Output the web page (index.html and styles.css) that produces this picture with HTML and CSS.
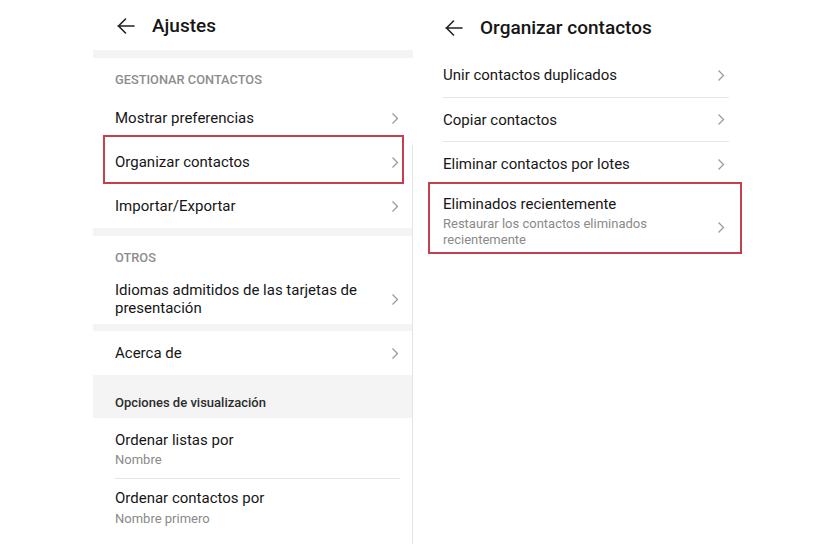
FILE: index.html
```html
<!DOCTYPE html>
<html lang="es">
<head>
<meta charset="utf-8">
<title>Ajustes</title>
<link rel="stylesheet" href="styles.css">
</head>
<body>
<div class="page">
  <section class="panel left">
    <header class="head">
      <svg class="back" width="18" height="16" viewBox="0 0 18 16"><path d="M1 8H17M8.5 1L1.5 8L8.5 15" fill="none" stroke="#222" stroke-width="1.6" stroke-linecap="round" stroke-linejoin="round"/></svg>
      <h1 class="title">Ajustes</h1>
    </header>
    <div class="band"></div>
    <div class="label">GESTIONAR CONTACTOS</div>
    <div class="row"><span class="txt">Mostrar preferencias</span><svg class="chev" width="8" height="13" viewBox="0 0 8 13"><path d="M1.5 1.5L6.5 6.5L1.5 11.5" fill="none" stroke="#9b9b9b" stroke-width="1.3"/></svg></div>
    <div class="row hl"><span class="txt">Organizar contactos</span><svg class="chev" width="8" height="13" viewBox="0 0 8 13"><path d="M1.5 1.5L6.5 6.5L1.5 11.5" fill="none" stroke="#9b9b9b" stroke-width="1.3"/></svg></div>
    <div class="row"><span class="txt">Importar/Exportar</span><svg class="chev" width="8" height="13" viewBox="0 0 8 13"><path d="M1.5 1.5L6.5 6.5L1.5 11.5" fill="none" stroke="#9b9b9b" stroke-width="1.3"/></svg></div>
    <div class="band"></div>
    <div class="label">OTROS</div>
    <div class="row tall"><span class="txt">Idiomas admitidos de las tarjetas de presentación</span><svg class="chev" width="8" height="13" viewBox="0 0 8 13"><path d="M1.5 1.5L6.5 6.5L1.5 11.5" fill="none" stroke="#9b9b9b" stroke-width="1.3"/></svg></div>
    <div class="band thin"></div>
    <div class="row"><span class="txt">Acerca de</span><svg class="chev" width="8" height="13" viewBox="0 0 8 13"><path d="M1.5 1.5L6.5 6.5L1.5 11.5" fill="none" stroke="#9b9b9b" stroke-width="1.3"/></svg></div>
    <div class="group">Opciones de visualización</div>
    <div class="item divided"><div class="txt">Ordenar listas por</div><div class="sub">Nombre</div></div>
    <div class="item"><div class="txt">Ordenar contactos por</div><div class="sub">Nombre primero</div></div>
  </section>
  <section class="panel right">
    <header class="head rhead">
      <svg class="back" width="18" height="16" viewBox="0 0 18 16"><path d="M1 8H17M8.5 1L1.5 8L8.5 15" fill="none" stroke="#222" stroke-width="1.6" stroke-linecap="round" stroke-linejoin="round"/></svg>
      <h1 class="title">Organizar contactos</h1>
    </header>
    <div class="list">
      <div class="rrow line"><span class="txt">Unir contactos duplicados</span><svg class="chev" width="8" height="13" viewBox="0 0 8 13"><path d="M1.5 1.5L6.5 6.5L1.5 11.5" fill="none" stroke="#9b9b9b" stroke-width="1.3"/></svg></div>
      <div class="rrow line short"><span class="txt">Copiar contactos</span><svg class="chev" width="8" height="13" viewBox="0 0 8 13"><path d="M1.5 1.5L6.5 6.5L1.5 11.5" fill="none" stroke="#9b9b9b" stroke-width="1.3"/></svg></div>
      <div class="rrow"><span class="txt">Eliminar contactos por lotes</span><svg class="chev" width="8" height="13" viewBox="0 0 8 13"><path d="M1.5 1.5L6.5 6.5L1.5 11.5" fill="none" stroke="#9b9b9b" stroke-width="1.3"/></svg></div>
      <div class="rrow big hl2">
        <div class="stack"><div class="txt">Eliminados recientemente</div><div class="sub2">Restaurar los contactos eliminados recientemente</div></div>
        <svg class="chev" width="8" height="13" viewBox="0 0 8 13"><path d="M1.5 1.5L6.5 6.5L1.5 11.5" fill="none" stroke="#9b9b9b" stroke-width="1.3"/></svg>
      </div>
    </div>
  </section>
</div>
</body>
</html>
```

FILE: styles.css
```css
* { box-sizing: border-box; }
html, body { margin: 0; padding: 0; background: #fff; }
body {
  font-family: Roboto, "Noto Sans", "Liberation Sans", sans-serif;
  color: #161616;
  width: 838px;
  height: 544px;
  overflow: hidden;
}
.page {
  display: flex;
  padding-left: 93px;
  height: 544px;
}
.panel { position: relative; }
.left { width: 320px; }
.left::after {
  content: "";
  position: absolute;
  right: 0;
  top: 145px;
  bottom: 0;
  width: 1px;
  background: #e3e3e3;
}
.right { width: 330px; }

.head {
  height: 50px;
  display: flex;
  align-items: center;
  padding-left: 24px;
  padding-top: 2px;
  gap: 17px;
}
.back { flex: none; }
.title {
  margin: 0;
  font-size: 19px;
  font-weight: 500;
  color: #161616;
  line-height: 24px;
}
.band { height: 8px; background: #f4f4f4; }
.band.thin { height: 7px; }
.label {
  padding: 14px 22px 8px;
  font-size: 12.8px;
  line-height: 16px;
  font-weight: 500;
  color: #8d8d8d;
}
.row {
  position: relative;
  height: 44px;
  display: flex;
  align-items: center;
  justify-content: space-between;
  padding: 0 14px 0 22px;
}
.row.tall { height: 50px; }
.row.tall .txt { width: 260px; line-height: 18px; }
.txt { font-size: 15px; line-height: 20px; color: #161616; }
.chev { flex: none; }
.hl::after {
  content: "";
  position: absolute;
  left: 10px;
  right: 9px;
  top: -5px;
  bottom: 0;
  border: 2px solid #c4404c;
}
.group {
  height: 43px;
  background: #f4f4f4;
  padding: 20px 22px 0;
  font-size: 13px;
  line-height: 16px;
  font-weight: 500;
  color: #2c2c2c;
}
.item {
  margin: 0 13px 0 22px;
  padding: 12px 0 9px;
}
.item.divided { border-bottom: 1px solid #e6e6e6; }
.item + .item { padding-top: 9px; }
.item + .item .sub { margin-top: 2px; }
.sub { font-size: 13px; line-height: 18px; color: #8a8a8a; margin-top: 1px; }

.rhead { height: 53px; padding-left: 32px; gap: 17px; padding-top: 3px; }
.list { margin: 0 14px 0 30px; }
.rrow {
  position: relative;
  height: 44px;
  display: flex;
  align-items: center;
  justify-content: space-between;
  padding-right: 4px;
}
.rrow.line { border-bottom: 1px solid #e6e6e6; height: 45px; }
.rrow.line.short { height: 44px; }
.rrow.big { height: 68px; align-items: flex-start; padding-top: 8px; }
.rrow.big .chev { margin-top: 27px; }
.stack { width: 230px; }
.sub2 { font-size: 13px; line-height: 16px; color: #8a8a8a; margin-top: 2px; }
.hl2::after {
  content: "";
  position: absolute;
  left: -15px;
  right: -13px;
  top: -4px;
  bottom: 0;
  border: 2px solid #c4404c;
}
```
